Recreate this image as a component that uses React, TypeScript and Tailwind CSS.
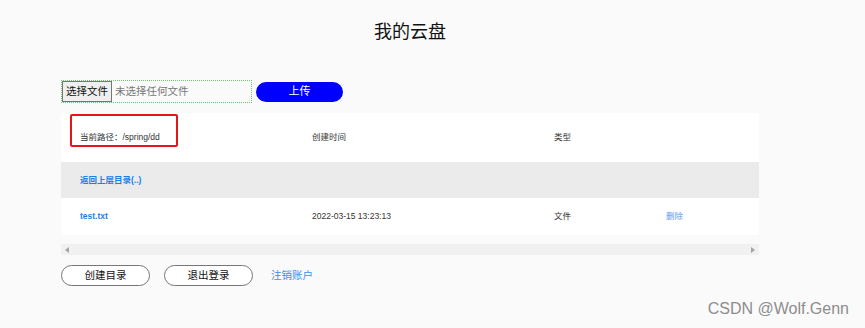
import React from "react";

const FONT = { fontFamily: '"Liberation Sans", "Noto Sans CJK SC", sans-serif' };

const COLS = "grid grid-cols-[232px_242px_112px_1fr] pl-[19px] items-center";

export default function App() {
  return (
    <div className="relative w-[865px] h-[328px] overflow-hidden bg-[#fafafa] text-[#333]" style={FONT}>
      <div className="ml-[61px] w-[698px]">
        {/* Title */}
        <h1 className="pt-[20px] text-center text-[18px] leading-[24px] text-[#111]">我的云盘</h1>

        {/* Upload row */}
        <div className="mt-[36px] flex items-center gap-[4px]">
          <div className="flex h-[23px] w-[191px] items-center border border-dotted border-[#6cc46c]">
            <span className="flex h-full w-[50px] items-center justify-center border border-[#767676] bg-[#efefef] text-[10.5px] text-[#111]">
              选择文件
            </span>
            <span className="pl-[3px] text-[10.5px] text-[#777]">未选择任何文件</span>
          </div>
          <button className="h-[20px] w-[87px] rounded-full bg-[#0000ff] text-[11px] text-white">上传</button>
        </div>

        {/* Table */}
        <div className="mt-[10px] bg-white text-[8.5px]">
          <div className={`${COLS} h-[49px]`}>
            <div className="relative">
              当前路径：/spring/dd
              <div className="absolute left-[-10px] top-[-17px] h-[33px] w-[108px] rounded-[2px] border-2 border-[#e8141b]" />
            </div>
            <div>创建时间</div>
            <div>类型</div>
            <div />
          </div>
          <div className={`${COLS} h-[36px] bg-[#ebebeb]`}>
            <div className="font-bold text-[#1e7ee8]">返回上层目录(..)</div>
          </div>
          <div className={`${COLS} h-[37px]`}>
            <div className="font-bold text-[#1e7ee8]">test.txt</div>
            <div>2022-03-15 13:23:13</div>
            <div>文件</div>
            <div className="text-[#5c9cf0]">删除</div>
          </div>
        </div>

        {/* Horizontal scrollbar */}
        <div className="mt-[9px] flex h-[11px] items-center justify-between bg-[#f1f1f1] px-[4px]">
          <svg width="4" height="6" viewBox="0 0 4 6"><path d="M4 0 L0 3 L4 6 Z" fill="#a3a3a3" /></svg>
          <svg width="4" height="6" viewBox="0 0 4 6"><path d="M0 0 L4 3 L0 6 Z" fill="#a3a3a3" /></svg>
        </div>

        {/* Bottom actions */}
        <div className="mt-[10px] flex items-center">
          <button className="h-[21px] w-[89px] rounded-full border border-[#767676] bg-white text-[10.5px] text-[#111]">创建目录</button>
          <button className="ml-[14px] h-[21px] w-[89px] rounded-full border border-[#767676] bg-white text-[10.5px] text-[#111]">退出登录</button>
          <a className="ml-[18px] text-[10.5px] text-[#3d8eea]">注销账户</a>
        </div>
      </div>

      {/* Watermark */}
      <div className="absolute right-[16px] top-[297px] text-[16px] text-[#8c8c8c] [text-shadow:0_0_1px_#fff]">CSDN @Wolf.Genn</div>
    </div>
  );
}
